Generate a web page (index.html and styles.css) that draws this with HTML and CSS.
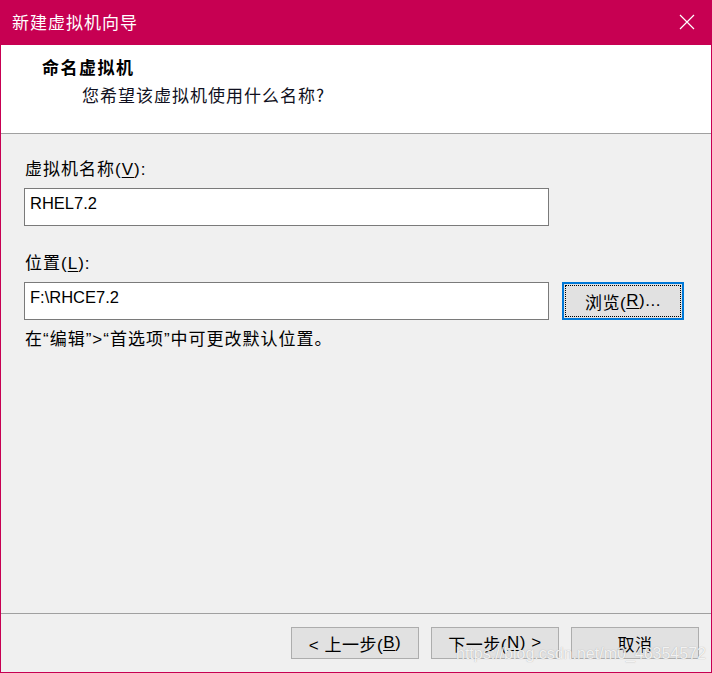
FILE: index.html
```html
<!DOCTYPE html>
<html lang="zh-CN">
<head>
<meta charset="utf-8">
<title>新建虚拟机向导</title>
<link rel="stylesheet" href="styles.css">
</head>
<body>
<div class="window">
  <div class="titlebar">
    <span class="title">新建虚拟机向导</span>
    <svg class="close" width="16" height="16" viewBox="0 0 16 16"><path d="M1 1 L15 15 M15 1 L1 15" stroke="#fff" stroke-width="1.2" fill="none"/></svg>
  </div>
  <div class="header">
    <div class="h-title">命名虚拟机</div>
    <div class="h-sub">您希望该虚拟机使用什么名称?</div>
  </div>
  <div class="content">
    <div class="label">虚拟机名称(<u>V</u>):</div>
    <div class="input wide">RHEL7.2</div>
    <div class="label second">位置(<u>L</u>):</div>
    <div class="row">
      <div class="input">F:\RHCE7.2</div>
      <div class="btn browse"><span class="focus">浏览(<u>R</u>)...</span></div>
    </div>
    <div class="note">在“编辑”&gt;“首选项”中可更改默认位置。</div>
  </div>
  <div class="footer">
    <div class="btn">&lt; 上一步(<u>B</u>)</div>
    <div class="btn">下一步(<u>N</u>) &gt;</div>
    <div class="btn">取消</div>
  </div>
  <div class="watermark">https://blog.csdn.net/m0_46354572</div>
</div>
</body>
</html>
```
FILE: styles.css
```css
html, body {
  margin: 0;
  padding: 0;
  background: #f0f0f0;
}
body {
  font-family: "Liberation Sans", "Noto Sans CJK SC", sans-serif;
  font-size: 17px;
  color: #000;
}
.window {
  position: relative;
  width: 712px;
  height: 673px;
  box-sizing: border-box;
  border: 1px solid #c70052;
  border-top: 0;
  display: flex;
  flex-direction: column;
  background: #f0f0f0;
}
.titlebar {
  height: 45px;
  flex: none;
  background: #c70052;
  color: #fff;
  display: flex;
  align-items: center;
  justify-content: space-between;
  padding: 0 16px 0 11px;
  box-sizing: border-box;
}
.title {
  font-family: "Noto Sans CJK SC", sans-serif;
  font-size: 17px;
  letter-spacing: 1px;
  line-height: 22px;
  margin-top: -1px;
}
.close {
  display: block;
  margin-top: -1px;
}
.header {
  height: 89px;
  flex: none;
  box-sizing: border-box;
  background: #fff;
  border-bottom: 1px solid #a0a0a0;
  padding: 11px 0 0 41px;
  font-family: "Noto Sans CJK SC", sans-serif;
}
.h-title {
  font-weight: bold;
  font-size: 17px;
  line-height: 22px;
  letter-spacing: 1.5px;
}
.h-sub {
  margin-top: 6px;
  padding-left: 40px;
  font-size: 17px;
  line-height: 22px;
  letter-spacing: 1px;
  color: #101020;
}
.content {
  flex: 1;
  padding: 25px 0 0 23px;
}
.label, .note {
  line-height: 22px;
  letter-spacing: 1px;
  padding-left: 1px;
}
.label u, .btn u {
  text-decoration-thickness: 1px;
  text-underline-offset: 2px;
}
.label.second {
  margin-top: 27px;
}
.input {
  box-sizing: border-box;
  width: 525px;
  height: 38px;
  background: #fff;
  border: 1px solid #7a7a7a;
  padding: 3px 0 0 5px;
  font-size: 16.5px;
  line-height: 22px;
}
.wide {
  margin-top: 7px;
}
.row {
  display: flex;
  gap: 13px;
  margin-top: 7px;
}
.btn {
  box-sizing: border-box;
  width: 128px;
  height: 32px;
  background: #e1e1e1;
  border: 1px solid #adadad;
  display: flex;
  align-items: center;
  justify-content: center;
  font-size: 17px;
  letter-spacing: 0.5px;
}
.btn.browse {
  width: 122px;
  height: 38px;
  border: 2px solid #0078d7;
  padding: 1px;
}
.focus {
  box-sizing: border-box;
  width: 100%;
  height: 100%;
  border: 1px dotted #000;
  display: flex;
  align-items: center;
  justify-content: center;
}
.note {
  margin-top: 9px;
}
.footer {
  height: 59px;
  flex: none;
  box-sizing: border-box;
  border-top: 1px solid #a0a0a0;
  display: flex;
  justify-content: flex-end;
  gap: 12px;
  padding: 13px 12px 0 0;
}
.watermark {
  position: absolute;
  left: 455px;
  top: 645px;
  font-family: "Liberation Sans", sans-serif;
  font-size: 16px;
  color: rgba(255, 255, 255, 0.85);
  text-shadow: 0 0 1px rgba(120, 120, 120, 0.6);
  white-space: nowrap;
  pointer-events: none;
}
```
